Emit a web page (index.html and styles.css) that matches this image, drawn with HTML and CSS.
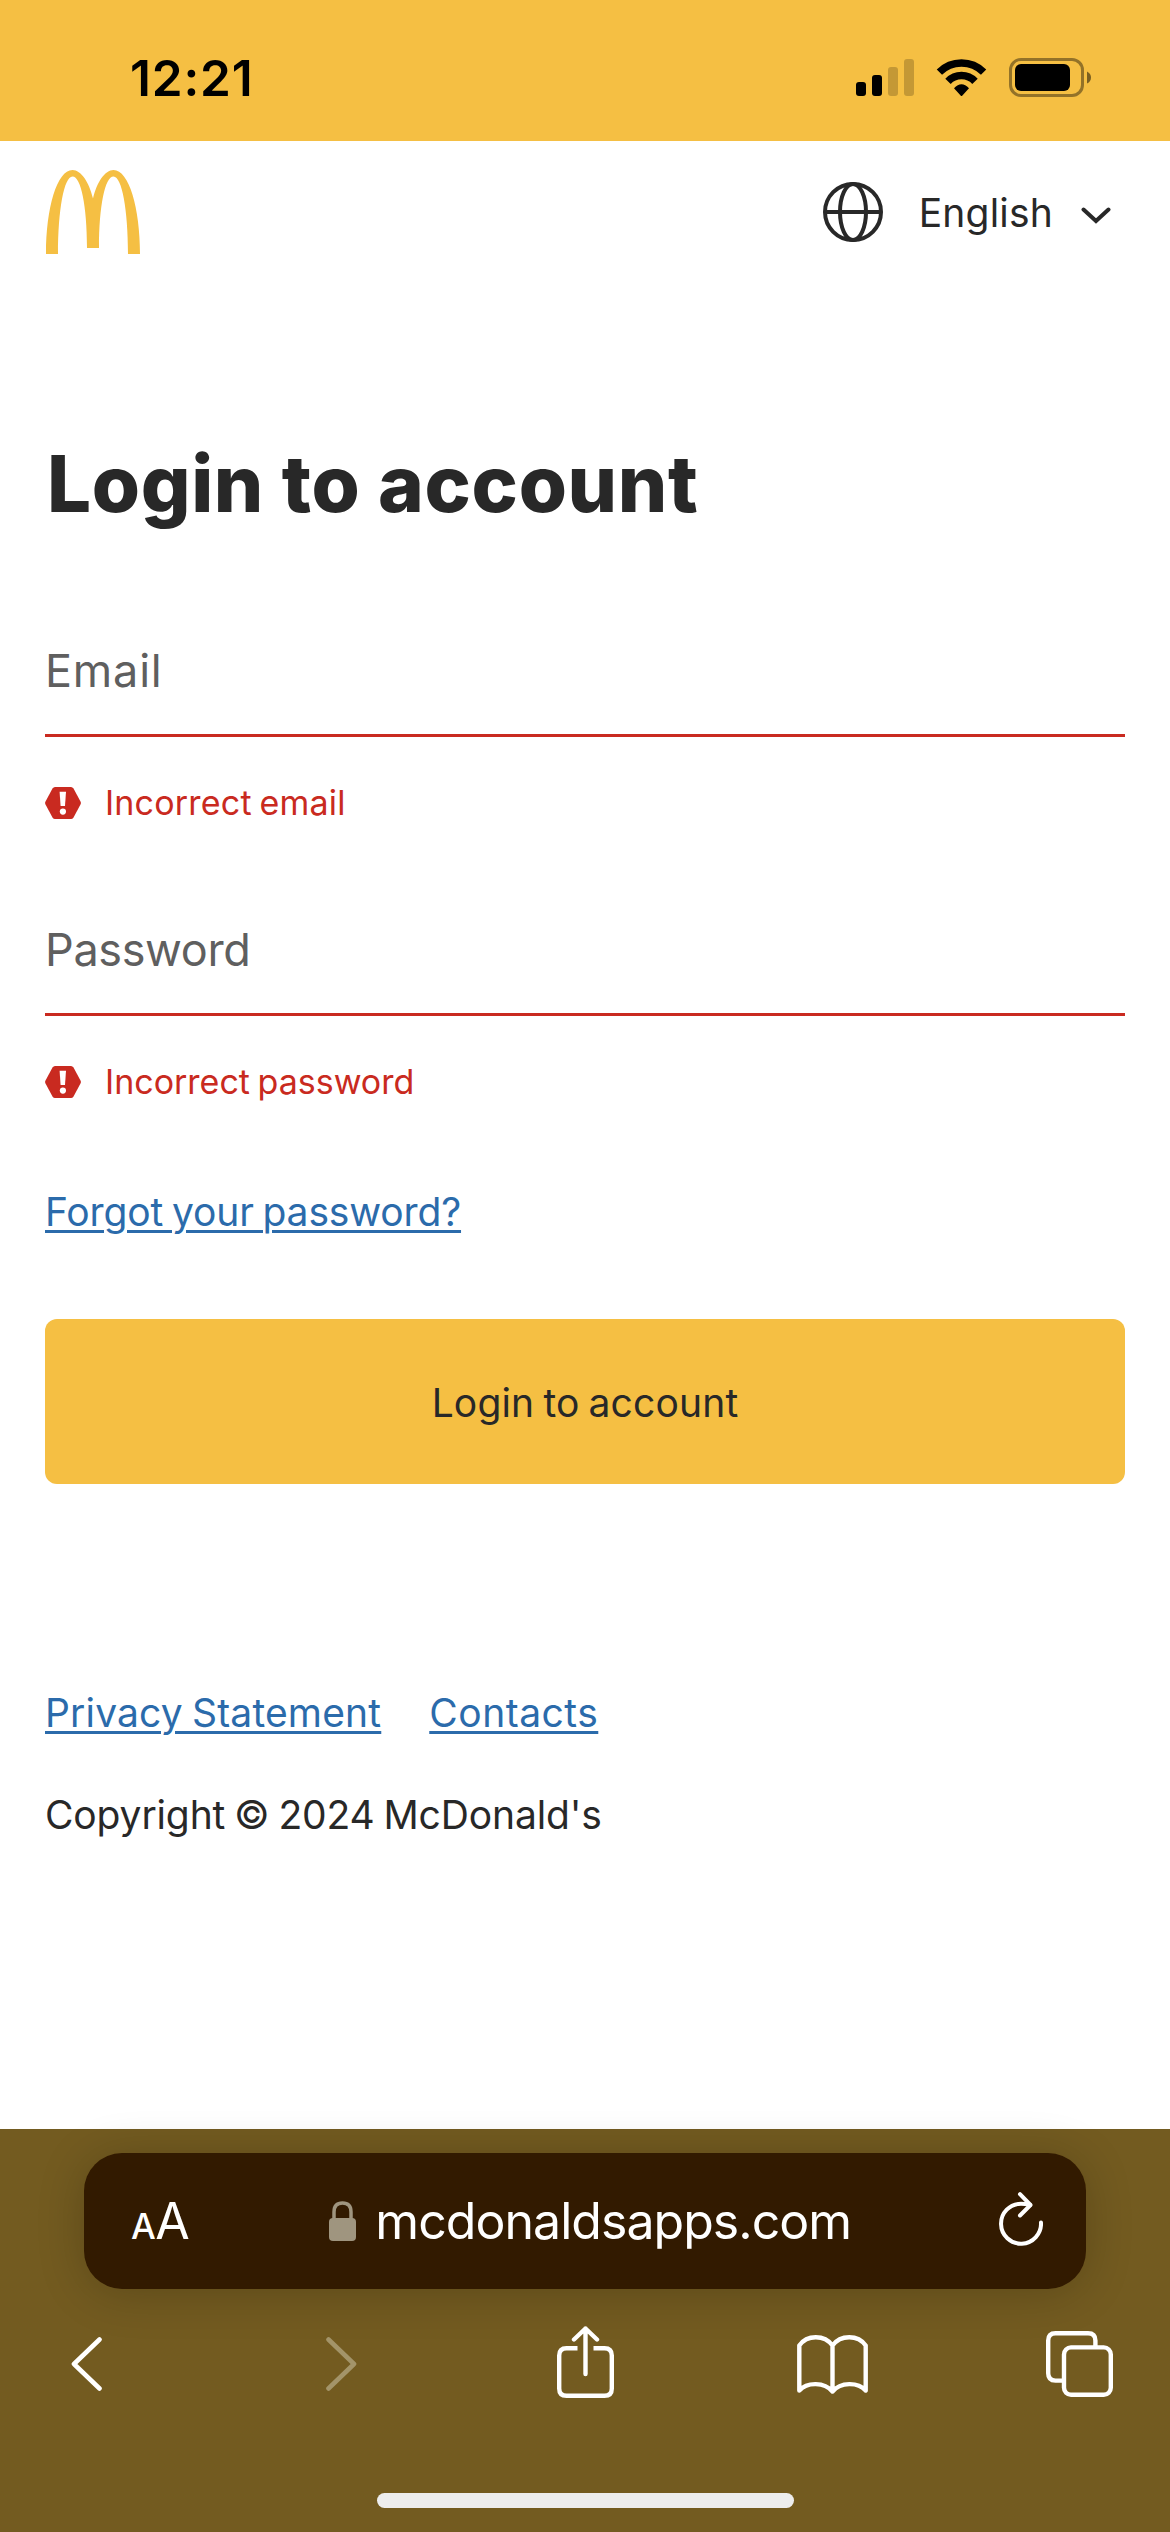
FILE: index.html
```html
<!DOCTYPE html>
<html lang="en">
<head>
<meta charset="utf-8">
<title>Login to account</title>
<link rel="stylesheet" href="styles.css">
</head>
<body>
<div class="screen">
  <div class="status">
    <span class="time">12:21</span>
    <div class="indicators">
      <svg class="signal" width="58" height="40" viewBox="0 0 58 40">
        <rect x="0" y="24" width="10" height="14" rx="3"/>
        <rect x="16" y="17" width="10" height="21" rx="3"/>
        <rect class="dim" x="32" y="9" width="10" height="29" rx="3"/>
        <rect class="dim" x="48" y="1" width="10" height="37" rx="3"/>
      </svg>
      <svg class="wifi" width="52" height="40" viewBox="0 0 52 40">
        <g fill="none" stroke="#000" stroke-width="7.5">
          <path d="M3.4 14.2A31.3 31.3 0 0 1 47.6 14.2"/>
          <path d="M12 23.4A18.6 18.6 0 0 1 39 23.4"/>
        </g>
        <path d="M18 30.2Q25.5 22.5 33 30.2L26.4 37.5Q25.5 38.5 24.6 37.5Z"/>
      </svg>
      <svg class="battery" width="83" height="40" viewBox="0 0 83 40">
        <rect x="1.5" y="1.5" width="72" height="36" rx="10.5" fill="none" stroke="#000" stroke-opacity=".4" stroke-width="3"/>
        <rect x="6" y="6" width="55" height="27" rx="6"/>
        <path d="M78 13.5Q82 15.5 82 19.5T78 25.5Z" fill-opacity=".5"/>
      </svg>
    </div>
  </div>

  <header class="header">
    <svg width="94" height="84" viewBox="0 0 94 84" fill="#f5bf43">
      <path d="M0 84C0 38 11 0 26.5 0C35 0 43 12 47 28.5C51 12 59 0 67.5 0C83 0 94 38 94 84H82C82 40 76 6.5 67.5 6.5C59 6.5 53 36 53 78H41C41 36 35 6.5 26.5 6.5C18 6.5 12 40 12 84Z"/>
    </svg>
    <div class="language">
      <svg width="60" height="60" viewBox="0 0 60 60" fill="none" stroke="#282828" stroke-width="4">
        <circle cx="30" cy="30" r="28"/>
        <ellipse cx="30" cy="30" rx="13" ry="28"/>
        <path d="M2 30H58"/>
      </svg>
      <span class="language-name">English</span>
      <svg class="caret" width="30" height="17" viewBox="0 0 30 17" fill="none" stroke="#282828" stroke-width="4" stroke-linecap="round">
        <path d="M2.5 2.5L15 14L27.5 2.5"/>
      </svg>
    </div>
  </header>

  <main class="main">
    <h1 class="title">Login to account</h1>
    <form class="form">
      <div class="field">
        <label class="label label-email">Email</label>
        <div class="error">
          <svg width="36" height="32" viewBox="0 0 36 32">
            <path d="M10 0H26Q27.5 0 28.5 1.5L35.5 14.5Q36.3 16 35.5 17.5L28.5 30.5Q27.5 32 26 32H10Q8.5 32 7.5 30.5L.5 17.5Q-.3 16 .5 14.5L7.5 1.5Q8.5 0 10 0Z" fill="#c92a20"/>
            <path d="M14.6 4.7H21L20 19H15.6Z" fill="#fff"/>
            <circle cx="17.9" cy="24.6" r="3.1" fill="#fff"/>
          </svg>
          <span class="error-email">Incorrect email</span>
        </div>
      </div>
      <div class="field">
        <label class="label label-password">Password</label>
        <div class="error">
          <svg width="36" height="32" viewBox="0 0 36 32">
            <path d="M10 0H26Q27.5 0 28.5 1.5L35.5 14.5Q36.3 16 35.5 17.5L28.5 30.5Q27.5 32 26 32H10Q8.5 32 7.5 30.5L.5 17.5Q-.3 16 .5 14.5L7.5 1.5Q8.5 0 10 0Z" fill="#c92a20"/>
            <path d="M14.6 4.7H21L20 19H15.6Z" fill="#fff"/>
            <circle cx="17.9" cy="24.6" r="3.1" fill="#fff"/>
          </svg>
          <span class="error-password">Incorrect password</span>
        </div>
      </div>
      <a class="link forgot" href="#">Forgot your password?</a>
      <button class="submit" type="button">Login to account</button>
    </form>
    <footer class="footer">
      <nav class="footer-links">
        <a class="link privacy" href="#">Privacy Statement</a>
        <a class="link contacts" href="#">Contacts</a>
      </nav>
      <p class="copyright">Copyright © 2024 McDonald's</p>
    </footer>
  </main>

  <div class="browser">
    <div class="address">
      <div class="text-size"><span class="a-small">A</span><span class="a-large">A</span></div>
      <div class="site">
        <svg width="27" height="40" viewBox="0 0 27 40">
          <path d="M5 19V11Q5 2 13.5 2T22 11V19" fill="none" stroke="#9f957f" stroke-width="3.5"/>
          <rect y="17" width="27" height="23" rx="4" fill="#9f957f"/>
        </svg>
        <span class="domain">mcdonaldsapps.com</span>
      </div>
      <svg class="reload" width="44" height="54" viewBox="0 0 44 54" fill="none" stroke="#fff" stroke-width="4" stroke-linecap="round" stroke-linejoin="round">
        <path d="M42 30.5A20 20 0 1 1 22 11.7Q26 11.7 31 13"/>
        <path d="M21 2.2L31.5 13L21 23.5"/>
      </svg>
    </div>
    <div class="tools">
      <svg class="low" width="31" height="54" viewBox="0 0 31 54" fill="none" stroke="#fff" stroke-width="4.6" stroke-linecap="round" stroke-linejoin="round"><path d="M28.5 2.5L3 27L28.5 51.5"/></svg>
      <svg class="low" width="31" height="54" viewBox="0 0 31 54" fill="none" stroke="#a39469" stroke-width="4.6" stroke-linecap="round" stroke-linejoin="round"><path d="M2.5 2.5L28 27L2.5 51.5"/></svg>
      <svg width="57" height="72" viewBox="0 0 57 72" fill="none" stroke="#fff" stroke-width="4.4" stroke-linejoin="round">
        <path d="M20.5 22.2H9.5Q2.2 22.2 2.2 29.5V62.5Q2.2 69.8 9.5 69.8H47.5Q54.8 69.8 54.8 62.5V29.5Q54.8 22.2 47.5 22.2H36.5"/>
        <path d="M28.5 48V2.5M17 13.5L28.5 2.5L40 13.5" stroke-linecap="round"/>
      </svg>
      <svg class="low" width="71" height="59" viewBox="0 0 71 59" fill="none" stroke="#fff" stroke-width="4.4" stroke-linecap="round" stroke-linejoin="round">
        <path d="M35.5 10.5C27.5-.5 10-.5 2.3 10.5V55.5C10 46.8 27.5 46.8 35.5 56.5C43.5 46.8 61 46.8 68.7 55.5V10.5C61-.5 43.5-.5 35.5 10.5V56"/>
      </svg>
      <svg class="low" width="67" height="66" viewBox="0 0 67 66" fill="none" stroke="#fff" stroke-width="4.4">
        <path d="M16 49.6H9.5Q2.2 49.6 2.2 42.3V9.5Q2.2 2.2 9.5 2.2H42Q49.4 2.2 49.4 9.5V15"/>
        <rect x="18" y="16.4" width="46.8" height="47.4" rx="7"/>
      </svg>
    </div>
    <div class="home"></div>
  </div>
</div>
</body>
</html>
```
FILE: styles.css
```css
* { box-sizing: border-box; }
body {
  margin: 0;
  background: #fff;
  color: #282828;
  font-family: Inter, "Liberation Sans", sans-serif;
  font-size: 39px;
  line-height: 50px;
  word-spacing: -2px;
}
svg { display: block; flex: none; }
h1, p { margin: 0; }

.screen {
  display: flex;
  flex-direction: column;
  width: 1170px;
  height: 2532px;
  overflow: hidden;
}

/* Status bar */
.status {
  display: flex;
  justify-content: space-between;
  height: 141px;
  padding: 48px 78px 0 130px;
  background: #f5bf43;
  color: #000;
}
.time {
  font-size: 49.5px;
  font-weight: 600;
  line-height: 60px;
  letter-spacing: .85px;
}
.indicators { display: flex; padding-top: 10px; }
.dim { fill-opacity: .2; }
.wifi { margin-left: 22px; }
.battery { margin-left: 21px; }

/* Page header */
.header {
  display: flex;
  align-items: center;
  justify-content: space-between;
  height: 142px;
  padding: 0 59px 0 46px;
}
.language { display: flex; align-items: center; }
.language-name {
  margin-left: 36px;
  padding-top: 2px;
  letter-spacing: .2px;
}
.caret { margin: 7px 0 0 28px; }

/* Login form */
.main { padding: 151px 45px 0; }
.title {
  padding-left: 2px;
  font-size: 78px;
  font-weight: 800;
  line-height: 100px;
  letter-spacing: .63px;
  word-spacing: 0;
}
.form { display: flex; flex-direction: column; padding-top: 107px; }
.field { margin-bottom: 101px; }
.field + .field { margin-bottom: 89px; }
.label {
  display: block;
  padding: 0 0 33px;
  border-bottom: 3px solid #c92a20;
  color: #5f5f5f;
  font-size: 45px;
  line-height: 60px;
}
.label-email { letter-spacing: .8px; }
.label-password { letter-spacing: -.35px; }
.error {
  display: flex;
  align-items: center;
  height: 32px;
  margin-top: 50px;
  color: #c92a20;
  font-size: 34px;
  line-height: 32px;
}
.error span { margin-left: 24px; }
.error-email { letter-spacing: .2px; }
.error-password { letter-spacing: 0; }

.link {
  color: #2b6bab;
  text-decoration: underline;
  text-decoration-thickness: 3px;
  text-underline-offset: 4px;
}
.forgot { align-self: flex-start; letter-spacing: -.14px; }
.submit {
  height: 165px;
  margin-top: 82px;
  padding: 2px 0 0;
  border: 0;
  border-radius: 12px;
  background: #f5bf43;
  color: #282828;
  font: inherit;
  letter-spacing: .15px;
  word-spacing: inherit;
}

.footer { padding-top: 204px; }
.footer-links { display: flex; gap: 48px; }
.privacy { letter-spacing: .17px; }
.contacts { letter-spacing: .5px; }
.copyright { margin-top: 52px; letter-spacing: -.13px; }

/* Browser toolbar */
.browser {
  height: 403px;
  margin-top: auto;
  padding-top: 24px;
  background: #735b20;
  color: #fff;
}
.address {
  display: grid;
  grid-template-columns: 1fr auto 1fr;
  align-items: center;
  height: 136px;
  margin: 0 84px;
  padding: 0 43.5px 0 47px;
  border-radius: 38px;
  background: #321a00;
  box-shadow: 0 4px 48px rgba(0, 0, 0, .2);
}
.text-size {
  display: flex;
  align-items: baseline;
  padding-top: 5px;
  line-height: 60px;
}
.a-small { font-size: 35px; font-weight: 500; letter-spacing: -.5px; }
.a-large { font-size: 50px; }
.site { display: flex; align-items: center; gap: 19px; padding-left: 7px; }
.domain {
  font-size: 50px;
  line-height: 60px;
  letter-spacing: -.96px;
}
.reload { justify-self: end; margin-bottom: 4px; }
.tools {
  display: grid;
  grid-template-columns: 255px 231px 240px 249px auto;
  align-items: center;
  height: 72px;
  margin: 37px 0 0 71px;
}
.low { margin-top: 4px; }
.home {
  width: 417px;
  height: 15px;
  margin: 95px auto 0;
  border-radius: 8px;
  background: #ededed;
}
```
